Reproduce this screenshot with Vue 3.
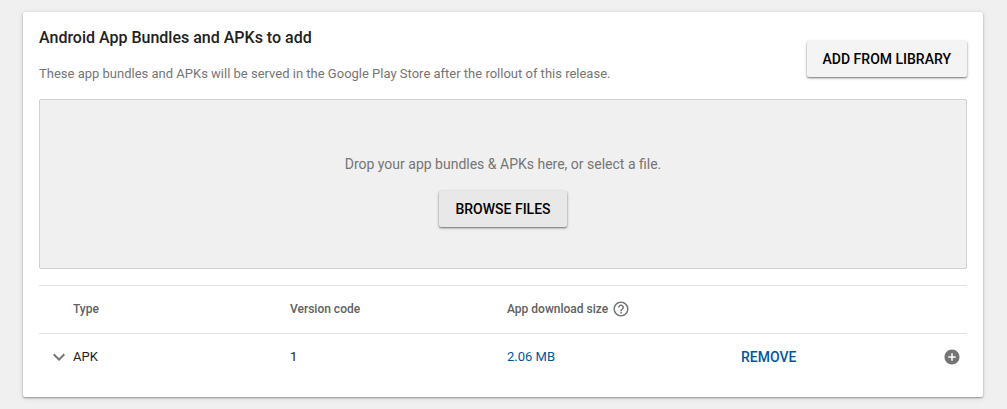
<script setup>
const rows = [{ type: 'APK', version: '1', size: '2.06 MB' }]
</script>

<template>
  <main class="page">
    <section class="card">
      <header class="head">
        <div class="intro">
          <h2>Android App Bundles and APKs to add</h2>
          <p>These app bundles and APKs will be served in the Google Play Store after the rollout of this release.</p>
        </div>
        <button type="button" class="raised">ADD FROM LIBRARY</button>
      </header>

      <div class="drop">
        <p>Drop your app bundles &amp; APKs here, or select a file.</p>
        <button type="button" class="raised grey">BROWSE FILES</button>
      </div>

      <table>
        <colgroup>
          <col class="c-toggle" /><col class="c-data" /><col class="c-data" /><col class="c-size" /><col /><col class="c-add" />
        </colgroup>
        <thead>
          <tr>
            <td></td>
            <th scope="col">Type</th>
            <th scope="col">Version code</th>
            <th scope="col">
              <span class="label">
                App download size
                <button type="button" class="icon" aria-label="Help">
                  <svg width="18" height="18" viewBox="0 0 24 24"><path d="M11 18h2v-2h-2v2zm1-16C6.48 2 2 6.48 2 12s4.480 10 10 10 10-4.480 10-10S17.520 2 12 2zm0 18c-4.410 0-8-3.590-8-8s3.590-8 8-8 8 3.590 8 8-3.590 8-8 8zm0-14c-2.210 0-4 1.790-4 4h2c0-1.100.9-2 2-2s2 .9 2 2c0 2-3 1.750-3 5h2c0-2.250 3-2.500 3-5 0-2.210-1.790-4-4-4z" /></svg>
                </button>
              </span>
            </th>
            <td></td>
            <td></td>
          </tr>
        </thead>
        <tbody>
          <tr v-for="row in rows" :key="row.version">
            <td class="toggle">
              <button type="button" class="icon" aria-label="Expand">
                <svg width="24" height="24" viewBox="0 0 24 24"><path d="M16.590 8.590 12 13.170 7.410 8.590 6 10l6 6 6-6z" /></svg>
              </button>
            </td>
            <td>{{ row.type }}</td>
            <td>{{ row.version }}</td>
            <td><a href="#">{{ row.size }}</a></td>
            <td><button type="button" class="remove">REMOVE</button></td>
            <td class="add">
              <button type="button" class="icon" aria-label="Add">
                <svg width="18" height="18" viewBox="0 0 24 24"><path d="M12 2C6.480 2 2 6.480 2 12s4.480 10 10 10 10-4.480 10-10S17.520 2 12 2zm5 11h-4v4h-2v-4H7v-2h4V7h2v4h4v2z" /></svg>
              </button>
            </td>
          </tr>
        </tbody>
      </table>
    </section>
  </main>
</template>

<style>
body {
  background: #f0f0f0;
}
</style>

<style scoped>
.page {
  padding: 12px 24px 12px 23px;
  font-family: Roboto, "Liberation Sans", sans-serif;
  font-size: 13px;
  line-height: 20px;
  color: #212121;
}
.card {
  padding: 16px;
  background: #fff;
  border-radius: 2px;
  box-shadow: 0 1px 2px rgba(0, 0, 0, 0.36), 0 1px 6px rgba(0, 0, 0, 0.1);
}
.head {
  display: flex;
  align-items: flex-end;
  justify-content: space-between;
  gap: 16px;
  margin-bottom: 22px;
}
h2,
p {
  margin: 0;
}
h2 {
  margin-bottom: 16px;
  font-size: 16px;
  font-weight: 500;
  line-height: 20px;
}
.intro {
  align-self: flex-start;
}
.intro p {
  line-height: 20px;
  margin-bottom: -7px;
  color: #757575;
}
button {
  margin: 0;
  padding: 0;
  border: 0;
  background: none;
  font: inherit;
  cursor: pointer;
}
.raised {
  height: 36px;
  padding: 0 16px;
  border-radius: 2px;
  background: #f4f4f4;
  box-shadow: 0 1px 2px rgba(0, 0, 0, 0.5), 0 1px 4px rgba(0, 0, 0, 0.1);
  color: #000;
  font-size: 14px;
  font-weight: 500;
  white-space: nowrap;
}
.raised.grey {
  background: #e8e8e8;
}
.drop {
  display: flex;
  flex-direction: column;
  align-items: center;
  gap: 17px;
  padding: 54px 16px 41px;
  border: 1px solid #d0d0d0;
  border-radius: 2px;
  background: #f0f0f0;
  color: #757575;
  font-size: 14px;
}
table {
  width: 100%;
  margin-top: 16px;
  table-layout: fixed;
  border-collapse: separate;
  border-spacing: 0;
}
.c-toggle {
  width: 34px;
}
.c-data {
  width: 217px;
}
.c-size {
  width: 234px;
}
.c-add {
  width: 40px;
}
th,
td {
  height: 47px;
  padding: 0;
  border-top: 1px solid #e0e0e0;
  text-align: left;
  vertical-align: middle;
}
th {
  height: 45px;
  padding-bottom: 2px;
  color: #616161;
  font-size: 12px;
  font-weight: 500;
}
.label {
  display: flex;
  align-items: center;
  gap: 4px;
}
.icon {
  display: block;
  color: #757575;
}
.icon svg {
  display: block;
  fill: currentColor;
}
.toggle .icon {
  margin-left: 8px;
}
.add .icon {
  margin: 0 6px 0 auto;
}
tbody td {
  height: 45px;
  padding-bottom: 2px;
}
a {
  color: #01579b;
  text-decoration: none;
}
.remove {
  display: block;
  color: #01579b;
  font-size: 14px;
  font-weight: 500;
}
</style>
